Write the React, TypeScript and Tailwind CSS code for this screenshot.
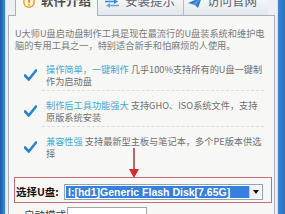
import React from "react";

const cjk = { fontFamily: '"Noto Sans CJK SC", "Noto Sans", sans-serif' };

function InfoIcon() {
  return (
    <svg width="12" height="12" viewBox="0 0 12 12">
      <circle cx="6" cy="6" r="5.2" fill="#fff4d6" stroke="#e3a233" strokeWidth="1.4" />
      <rect x="5.2" y="2.6" width="1.6" height="4.6" rx="0.6" fill="#d38a1e" />
      <rect x="5.2" y="8" width="1.6" height="1.6" rx="0.6" fill="#d38a1e" />
    </svg>
  );
}

function SwapIcon() {
  return (
    <svg width="16" height="9" viewBox="0 0 16 9">
      <path d="M1 2.5h10" stroke="#3d8bd4" strokeWidth="1.6" />
      <path d="M10 0l4 2.5-4 2.5z" fill="#3d8bd4" />
      <path d="M15 6.5H5" stroke="#6aa8e0" strokeWidth="1.6" />
      <path d="M6 4L2 6.5 6 9z" fill="#6aa8e0" />
    </svg>
  );
}

function PlaneIcon() {
  return (
    <svg width="14" height="11" viewBox="0 0 14 11">
      <path d="M0 6L14 0 10 11 7 8z" fill="#2f7fd2" />
      <path d="M7 8L14 0 5.5 6.5z" fill="#5fa2e4" />
    </svg>
  );
}

function Check() {
  return (
    <svg width="13" height="12" viewBox="0 0 13 12" className="shrink-0">
      <path d="M1 6.5L4.8 10.5 12 1.5" fill="none" stroke="#2a83cf" strokeWidth="2.6" strokeLinecap="round" strokeLinejoin="round" />
    </svg>
  );
}

const items = [
  { hl: "操作简单，一键制作", l1: " 几乎100%支持所有的U盘一键制", l2: "作为启动盘" },
  { hl: "制作后工具功能强大", l1: " 支持GHO、ISO系统文件，支持", l2: "原版系统安装" },
  { hl: "兼容性强", l1: " 支持最新型主板与笔记本，多个PE版本供选", l2: "择" },
];

export default function App() {
  return (
    <div className="relative w-[285px] h-[214px] overflow-hidden flex" style={cjk}>
      {/* window frame left */}
      <div className="w-[6px] bg-gradient-to-r from-[#185aa6] to-[#3c8ad6] border-r border-[#cfe0f0]" />

      <div className="flex-1 flex flex-col bg-[#edf0f2] px-[2px]">
        {/* tabs */}
        <div className="h-[16px] flex pl-[7px] shrink-0">
          <div className="relative z-10 w-[83px] h-[16px] bg-[#f7f7f5] border-x border-[#a7b0ba] flex items-start pl-[7px] gap-[6px]">
            <div className="-mt-[4px]"><InfoIcon /></div>
            <span className="-mt-[6px] text-[12.5px] leading-[14px] font-bold text-[#4d4d4d]">软件介绍</span>
          </div>
          <div className="w-[86px] h-[15px] bg-gradient-to-b from-[#f3f5f7] to-[#e3e8ed] border-r border-[#b4bcc6] flex items-start pl-[6px] gap-[5px]">
            <div className="-mt-px"><SwapIcon /></div>
            <span className="-mt-[6px] text-[12.5px] leading-[14px] text-[#5a6470]">安装提示</span>
          </div>
          <div className="w-[84px] h-[15px] bg-gradient-to-b from-[#f3f5f7] to-[#e3e8ed] flex items-start pl-[4px] gap-[5px]">
            <div className="-mt-[3px]"><PlaneIcon /></div>
            <span className="-mt-[6px] text-[12.5px] leading-[14px] text-[#5a6470]">访问官网</span>
          </div>
        </div>

        {/* panel */}
        <div className="-mt-px flex-1 border border-[#a7b0ba] bg-[#f7f7f5] pl-[6px] pt-[11px]">
          <p className="text-[9.2px] leading-[12px] text-[#7a7a7a] whitespace-nowrap">
            U大师U盘启动盘制作工具是现在最流行的U盘装系统和维护电
            <br />
            脑的专用工具之一，特别适合新手和怕麻烦的人使用。
          </p>

          <div className="mt-[12px]">
            {items.map((it, i) => (
              <div key={i}>
                {i > 0 && <div className="ml-[27px] mr-[10px] border-t border-dashed border-[#dcdcdc]" />}
                <div className={`flex items-center gap-[9px] pl-[9px] pb-[3px] ${i > 0 ? "pt-[8px]" : ""}`}>
                  <Check />
                  <p className="text-[9.2px] leading-[12px] text-[#707070] whitespace-nowrap">
                    <span className="text-[#3fa9d6]">{it.hl}</span>
                    {it.l1}
                    <br />
                    {it.l2}
                  </p>
                </div>
              </div>
            ))}
          </div>

          {/* select row, outlined in red */}
          <div className="mt-[15px] -ml-px w-[258px] border border-[#c46a78] pt-[6px] pb-[2px] pl-[1px] flex items-center gap-[2px]">
            <span className="w-[46px] text-[10.5px] leading-[16px] font-bold text-[#111] whitespace-nowrap">选择U盘:</span>
            <div className="w-[199px] h-[16px] border border-[#8ea2b8] bg-white p-px flex">
              <div className="flex-1 bg-[#3580de] flex items-center pl-[2px]">
                <span className="text-[10.5px] leading-[12px] font-bold text-white whitespace-nowrap" style={{ fontFamily: '"Liberation Sans", Arial, sans-serif' }}>
                  I:[hd1]Generic Flash Disk[7.65G]
                </span>
              </div>
              <div className="w-[12px] bg-[#f2f2f2] border-l border-[#c8c8c8] flex items-center justify-center">
                <svg width="6" height="4" viewBox="0 0 6 4"><path d="M0 0h6L3 4z" fill="#111" /></svg>
              </div>
            </div>
          </div>

          {/* next row, cut off */}
          <div className="mt-[4px] flex items-start gap-[4px]">
            <span className="w-[48px] pl-[9px] text-[10.5px] leading-[16px] text-[#444] whitespace-nowrap">启动模式:</span>
            <div className="w-[80px] h-[16px] border border-[#a3a3a3] bg-white" />
          </div>
        </div>
      </div>

      {/* window frame right */}
      <div className="w-[8px] bg-gradient-to-r from-[#3b86d2] to-[#2a70c0] border-l border-[#d4e3f2]" />

      {/* red annotation arrow */}
      <div className="absolute left-[133px] top-[148px] w-[2px] h-[23px] bg-[#b86a6a]" />
      <svg className="absolute left-[129px] top-[169px]" width="10" height="9" viewBox="0 0 10 9">
        <path d="M0 0h10L5 9z" fill="#d42a2a" />
      </svg>
    </div>
  );
}
